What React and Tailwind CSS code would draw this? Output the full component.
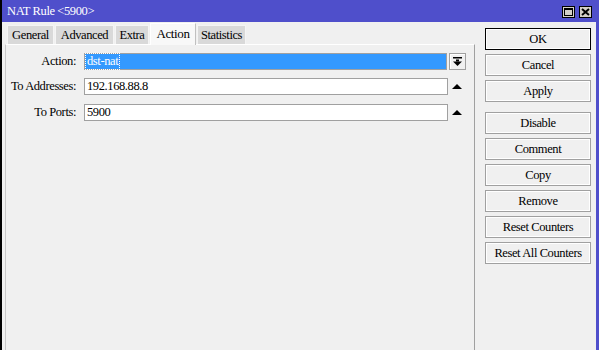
import React from "react";

const tabs = [
  { name: "General", w: "w-[47px]" },
  { name: "Advanced", w: "w-[59px]" },
  { name: "Extra", w: "w-[34px]" },
  { name: "Action", w: "w-[46px]", active: true },
  { name: "Statistics", w: "w-[49px]" },
];

const buttons = [
  ["OK", "mt-0"],
  ["Cancel", "mt-[4px]"],
  ["Apply", "mt-[4px]"],
  ["Disable", "mt-[10px]"],
  ["Comment", "mt-[4px]"],
  ["Copy", "mt-[4px]"],
  ["Remove", "mt-[4px]"],
  ["Reset Counters", "mt-[4px]"],
  ["Reset All Counters", "mt-[4px]"],
];

function UpArrow() {
  return (
    <svg width="10" height="6" viewBox="0 0 10 6" className="ml-[4px]">
      <polygon points="0,5 5,0 10,5" fill="#000" />
    </svg>
  );
}

function Row({ label, children, className }) {
  return (
    <div className={`flex items-center h-[17px] ${className || ""}`}>
      <div className="w-[71px] text-right pr-[1px]">{label}</div>
      <div className="ml-[7px] flex items-center">{children}</div>
    </div>
  );
}

export default function App() {
  return (
    <div className="w-[599px] h-[350px] flex bg-black overflow-hidden font-['Liberation_Serif',serif] text-[12.5px] tracking-[-0.4px] leading-none text-black">
      <div className="ml-[2px] flex-1 flex flex-col border-r-[3px] border-[#4f4fcb]">
        {/* title bar */}
        <div className="h-[22px] bg-[#4f4fcb] flex items-center pl-[5px] pr-[4px] text-white">
          <span className="pt-[1px]">NAT Rule &lt;5900&gt;</span>
          <div className="ml-auto flex gap-[4px] items-center mt-[1px]">
            <div className="w-[13px] h-[12px] bg-[#d4d0c8] border border-black flex items-center justify-center">
              <div className="w-[9px] h-[8px] border border-black border-t-2" />
            </div>
            <div className="w-[13px] h-[12px] bg-[#d4d0c8] border border-black flex items-center justify-center">
              <svg width="9" height="8" viewBox="0 0 9 8">
                <path d="M1 1 L8 7 M8 1 L1 7" stroke="#000" strokeWidth="2" />
              </svg>
            </div>
          </div>
        </div>

        {/* body */}
        <div className="flex-1 flex bg-[#f0f0f0]">
          <div className="w-[473px] pl-[3px] flex flex-col bg-[#f0f0f0]">
            <div className="h-[22px] flex items-end pl-[2px] gap-[1px]">
              {tabs.map((t) =>
                t.active ? (
                  <div
                    key={t.name}
                    className={`${t.w} h-[22px] -mb-px relative z-10 bg-[#f8f8f8] border-t border-l border-r border-white border-r-[#c0c0c0] flex items-center justify-center text-[13px] pb-[2px]`}
                  >
                    {t.name}
                  </div>
                ) : (
                  <div
                    key={t.name}
                    className={`${t.w} h-[19px] bg-[#d9d9d9] border-t border-l border-r border-[#f4f4f4] flex items-center justify-center`}
                  >
                    {t.name}
                  </div>
                )
              )}
            </div>
            <div className="flex-1 border-t border-l border-r border-t-white border-l-[#c8c8c8] border-r-[#a0a0a0] pt-[8px]">
              <Row label="Action:">
                <div className="w-[363px] h-[17px] bg-[#3399ff] border border-[#a0a0a0] flex items-center pl-[1px]">
                  <span className="text-white outline outline-1 outline-dotted outline-white px-[1px] py-[1px]">dst-nat</span>
                </div>
                <div className="ml-[2px] w-[17px] h-[17px] border border-[#a0a0a0] bg-[#f0f0f0] shadow-[inset_1px_1px_0_#fff] flex items-center justify-center">
                  <svg width="9" height="9" viewBox="0 0 9 9">
                    <rect x="0" y="0" width="9" height="1.5" fill="#000" />
                    <rect x="3" y="2.5" width="3" height="2" fill="#000" />
                    <polygon points="0,4.5 9,4.5 4.5,9" fill="#000" />
                  </svg>
                </div>
              </Row>
              <Row label="To Addresses:" className="mt-[8px]">
                <div className="w-[364px] h-[17px] bg-white border border-[#a0a0a0] flex items-center pl-[2px]">
                  192.168.88.8
                </div>
                <UpArrow />
              </Row>
              <Row label="To Ports:" className="mt-[9px]">
                <div className="w-[364px] h-[17px] bg-white border border-[#a0a0a0] flex items-center pl-[2px]">
                  5900
                </div>
                <UpArrow />
              </Row>
            </div>
          </div>

          <div className="ml-[10px] w-[106px] pt-[6px] flex flex-col">
            {buttons.map(([label, m], i) => (
              <div
                key={label}
                className={`${m} h-[22px] flex items-center justify-center bg-[#f0f0f0] border ${
                  i === 0 ? "border-black shadow-[inset_0_0_0_1px_#fff]" : "border-[#a0a0a0] shadow-[inset_0_0_0_1px_#fff]"
                }`}
              >
                {label}
              </div>
            ))}
          </div>
        </div>
      </div>
    </div>
  );
}
